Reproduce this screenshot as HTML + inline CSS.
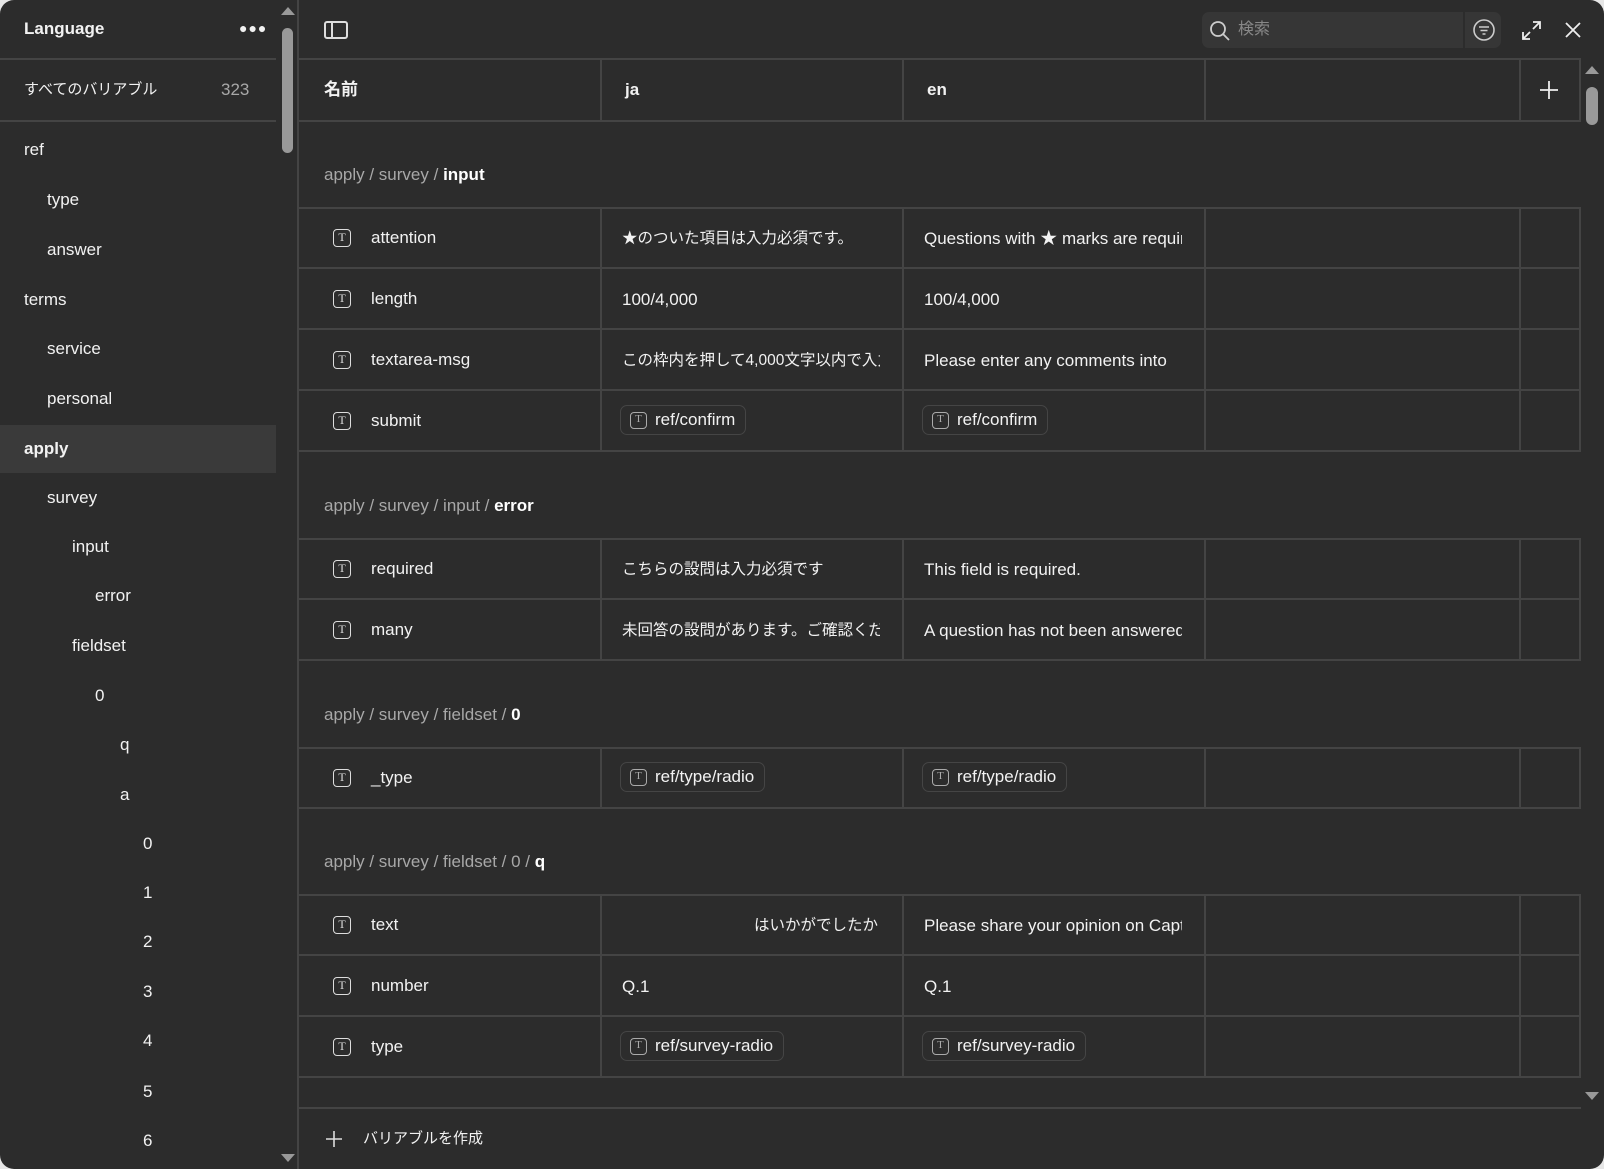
<!DOCTYPE html>
<html><head><meta charset="utf-8"><style>
*{margin:0;padding:0;box-sizing:border-box}
body{width:1604px;height:1169px;background:#e6e6e6;overflow:hidden;font-family:"Liberation Sans","Noto Sans CJK JP",sans-serif;color:#f2f2f2;font-size:17px}
#win{position:absolute;left:0;top:0;width:1604px;height:1169px;background:#2c2c2c;border-radius:14px;overflow:hidden}
.a{position:absolute;white-space:nowrap}
.hl{position:absolute;background:#444}
.vl{position:absolute;background:#444;width:2px}
.t{line-height:20px;transform:translateY(-10px)}
.ic{position:absolute;width:18px;height:18px;border:1.6px solid #ddd;border-radius:4px;font-size:12px;line-height:14px;text-align:center;color:#ddd;font-family:"Liberation Serif",serif}
.chip{position:absolute;height:30px;border:1px solid #454545;border-radius:7px;padding:0 10px 0 34px;line-height:28px;font-size:17px}
.chip .ic{left:9px;top:6px;width:17px;height:17px;font-size:11px;line-height:13px;border-color:#aaa;color:#aaa}
.g{color:#a8a8a8}
.jp{font-size:15.5px}
</style></head><body><div id="win">
<div class="a t" style="left:24px;top:29px;font-weight:bold">Language</div>
<div class="a" style="left:239px;top:20px;font-size:14px;letter-spacing:1px">●●●</div>
<div class="hl" style="left:0;top:58px;width:276px;height:2px"></div>
<div class="a t" style="left:24px;top:90px;font-size:15px">すべてのバリアブル</div>
<div class="a t g" style="left:221px;top:90px">323</div>
<div class="hl" style="left:0;top:120px;width:276px;height:2px"></div>
<div class="a" style="left:0;top:425px;width:276px;height:48px;background:#3a3a3a"></div>
<div class="a t" style="left:24px;top:150px">ref</div>
<div class="a t" style="left:47px;top:200px">type</div>
<div class="a t" style="left:47px;top:250px">answer</div>
<div class="a t" style="left:24px;top:300px">terms</div>
<div class="a t" style="left:47px;top:349px">service</div>
<div class="a t" style="left:47px;top:399px">personal</div>
<div class="a t" style="left:24px;top:449px;font-weight:bold">apply</div>
<div class="a t" style="left:47px;top:498px">survey</div>
<div class="a t" style="left:72px;top:547px">input</div>
<div class="a t" style="left:95px;top:596px">error</div>
<div class="a t" style="left:72px;top:646px">fieldset</div>
<div class="a t" style="left:95px;top:696px">0</div>
<div class="a t" style="left:120px;top:745px">q</div>
<div class="a t" style="left:120px;top:795px">a</div>
<div class="a t" style="left:143px;top:844px">0</div>
<div class="a t" style="left:143px;top:893px">1</div>
<div class="a t" style="left:143px;top:942px">2</div>
<div class="a t" style="left:143px;top:992px">3</div>
<div class="a t" style="left:143px;top:1041px">4</div>
<div class="a t" style="left:143px;top:1092px">5</div>
<div class="a t" style="left:143px;top:1141px">6</div>
<div class="a" style="left:281px;top:7px;border:7px solid transparent;border-bottom:8px solid #999;border-top:0"></div>
<div class="a" style="left:282px;top:28px;width:11px;height:125px;border-radius:6px;background:#999"></div>
<div class="a" style="left:281px;top:1154px;border:7px solid transparent;border-top:8px solid #999;border-bottom:0"></div>
<div class="vl" style="left:297px;top:0;height:1169px"></div>
<div class="a" style="left:324px;top:21px;width:24px;height:18px;border:2px solid #ddd;border-radius:3px"><div style="position:absolute;left:5px;top:0;width:2px;height:14px;background:#ddd"></div></div>
<div class="a" style="left:1202px;top:12px;width:299px;height:36px;background:#363636;border-radius:7px"></div>
<div class="a" style="left:1463px;top:12px;width:2px;height:36px;background:#2c2c2c"></div>
<svg class="a" style="left:1209px;top:20px" width="22" height="22" viewBox="0 0 22 22"><circle cx="9" cy="9" r="7" fill="none" stroke="#ccc" stroke-width="1.8"/><path d="M14 14l6 6" stroke="#ccc" stroke-width="1.8"/></svg>
<div class="a t" style="left:1238px;top:30px;color:#888;font-size:16px">検索</div>
<svg class="a" style="left:1472px;top:18px" width="24" height="24" viewBox="0 0 24 24" fill="none" stroke="#ccc" stroke-width="1.6"><circle cx="12" cy="12" r="10"/><path d="M7 9h10M8.5 12.5h7M10.5 16h3"/></svg>
<svg class="a" style="left:1521px;top:20px" width="21" height="21" viewBox="0 0 21 21" fill="none" stroke="#eee" stroke-width="1.8"><path d="M12 2h7v7M19 2l-7 7M9 19H2v-7M2 19l7-7"/></svg>
<svg class="a" style="left:1564px;top:21px" width="18" height="18" viewBox="0 0 18 18" stroke="#eee" stroke-width="1.8"><path d="M2 2l14 14M16 2L2 16"/></svg>
<div class="hl" style="left:299px;top:58px;width:1282px;height:2px"></div>
<div class="hl" style="left:299px;top:120px;width:1282px;height:2px"></div>
<div class="vl" style="left:600px;top:60px;height:60px"></div>
<div class="vl" style="left:902px;top:60px;height:60px"></div>
<div class="vl" style="left:1204px;top:60px;height:60px"></div>
<div class="vl" style="left:1519px;top:60px;height:60px"></div>
<div class="vl" style="left:1579px;top:60px;height:62px"></div>
<div class="a t" style="left:324px;top:90px;font-weight:bold">名前</div>
<div class="a t" style="left:625px;top:90px;font-weight:bold">ja</div>
<div class="a t" style="left:927px;top:90px;font-weight:bold">en</div>
<svg class="a" style="left:1539px;top:80px" width="20" height="20" stroke="#eee" stroke-width="1.8"><path d="M10 1v18M1 10h18"/></svg>
<div class="a" style="left:1585px;top:66px;border:7px solid transparent;border-bottom:8px solid #999;border-top:0"></div>
<div class="a" style="left:1586px;top:87px;width:12px;height:38px;border-radius:6px;background:#999"></div>
<div class="a" style="left:1585px;top:1092px;border:7px solid transparent;border-top:8px solid #999;border-bottom:0"></div>
<div id="rows"></div>
<div class="hl" style="left:299px;top:1107px;width:1282px;height:2px"></div>
<svg class="a" style="left:325px;top:1130px" width="18" height="18" stroke="#ddd" stroke-width="1.6"><path d="M9 1v16M1 9h16"/></svg>
<div class="a t" style="left:363px;top:1139px;font-size:15px">バリアブルを作成</div>
</div>
<script>
var R=document.getElementById('rows'),h='';
function sec(y,parts,bold){h+='<div class="a t g" style="left:324px;top:'+y+'px">'+parts+'<b style="color:#fff">'+bold+'</b></div>';}
function cell(x,y,v,jp){if(v&&v.c){h+='<div class="chip" style="left:'+(x+18)+'px;top:'+(y+15)+'px"><div class="ic">T</div>'+v.c+'</div>';}else{var st=v&&v.r?'left:'+x+'px;width:276px;text-align:right;':'left:'+(x+20)+'px;width:258px;overflow:hidden;';h+='<div class="a t'+(jp?' jp':'')+'" style="'+st+'top:'+(y+32)+'px">'+(v&&v.r?v.r:v)+'</div>';}}
function rows(top,list){var y=top;h+='<div class="hl" style="left:299px;top:'+y+'px;width:1282px;height:2px"></div>';
list.forEach(function(r){h+='<div class="ic" style="left:333px;top:'+(y+22)+'px">T</div><div class="a t" style="left:371px;top:'+(y+31)+'px">'+r[0]+'</div>';
cell(602,y,r[1],/[\u3000-\u9fff★]/.test(typeof r[1]=='string'?r[1]:(r[1].r||'')));cell(904,y,r[2]);y+=61;h+='<div class="hl" style="left:299px;top:'+(y-1)+'px;width:1282px;height:2px"></div>';});
[600,902,1204,1519,1579].forEach(function(x){h+='<div class="vl" style="left:'+x+'px;top:'+top+'px;height:'+(y-top)+'px"></div>';});}
sec(175,'apply / survey / ','input');
rows(207,[['attention','★のついた項目は入力必須です。','Questions with ★ marks are required'],['length','100/4,000','100/4,000'],['textarea-msg','この枠内を押して4,000文字以内で入力してください','Please enter any comments into'],['submit',{c:'ref/confirm'},{c:'ref/confirm'}]]);
sec(506,'apply / survey / input / ','error');
rows(538,[['required','こちらの設問は入力必須です','This field is required.'],['many','未回答の設問があります。ご確認ください','A question has not been answered']]);
sec(715,'apply / survey / fieldset / ','0');
rows(747,[['_type',{c:'ref/type/radio'},{c:'ref/type/radio'}]]);
sec(862,'apply / survey / fieldset / 0 / ','q');
rows(894,[['text',{r:'はいかがでしたか'},'Please share your opinion on Captain'],['number','Q.1','Q.1'],['type',{c:'ref/survey-radio'},{c:'ref/survey-radio'}]]);
R.outerHTML=h;
</script>
</body></html>
